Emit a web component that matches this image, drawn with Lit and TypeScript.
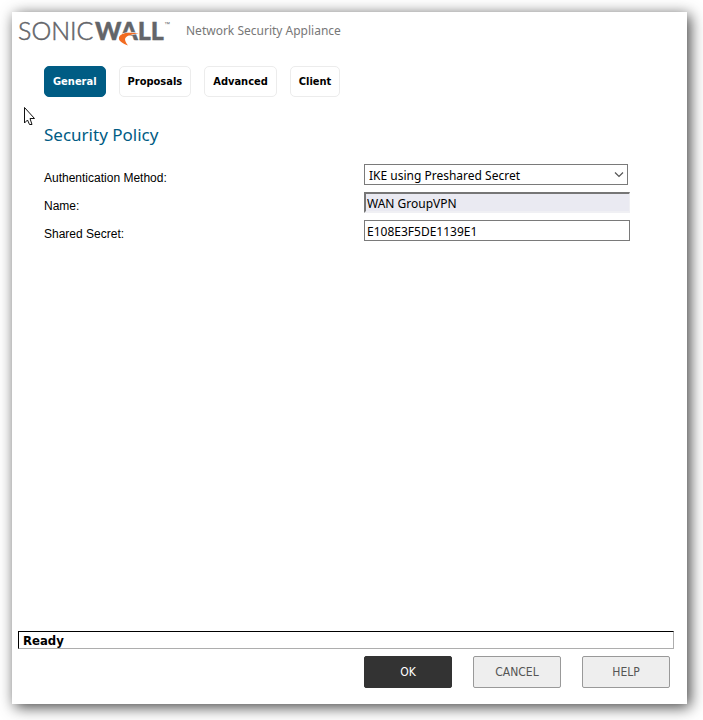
import { LitElement, html, css } from "lit";
import { customElement, state } from "lit/decorators.js";

@customElement("brand-logo")
class BrandLogo extends LitElement {
  static styles = css`
    :host { display: block; width: 152px; height: 28px; color: #636569; }
    svg { display: block; width: 152px; height: 28px; overflow: visible; }
    .word { font-family: Lato, sans-serif; font-size: 25px; fill: currentColor; }
    .thin { font-weight: 300; stroke: currentColor; stroke-width: 0.5px; }
    .heavy { font-weight: 900; stroke: currentColor; stroke-width: 0.4px; }
    .mark { font-family: "Liberation Sans", sans-serif; font-size: 6px; fill: currentColor; }
  `;
  render() {
    return html`
      <svg viewBox="0 0 152 28" role="img" aria-label="SonicWall">
        <text class="word thin" x="0" y="22">SONIC</text>
        <text class="word heavy" x="77" y="22">WALL</text>
        <text class="mark" x="146" y="8">™</text>
        <path d="M101 19.500C102 15 110 13.500 121 15.500C114 16 108 17.500 107 21C107 23 108 25 110 27.500C105 25.500 100 23 101 19.500Z" fill="#f26b21" stroke="#fff" stroke-width="1" paint-order="stroke" />
      </svg>
    `;
  }
}

@customElement("app-root")
class AppRoot extends LitElement {
  @state() private tab = "General";

  private tabs = ["General", "Proposals", "Advanced", "Client"];

  static styles = css`
    * { box-sizing: border-box; }
    :host {
      display: block;
      box-sizing: border-box;
      min-height: 100vh;
      padding: 12px 16px 16px 12px;
      background: #fff;
      color: #000;
      font-family: "DejaVu Sans Condensed", "Noto Sans", sans-serif;
      font-size: 12px;
    }
    .window {
      position: relative;
      display: flex;
      flex-direction: column;
      min-height: calc(100vh - 28px);
      background: #fff;
      box-shadow: 3px 3px 14px rgba(0, 0, 0, 0.75);
    }
    header { display: flex; align-items: flex-start; gap: 16px; padding: 6px; }
    .product { padding-top: 4px; font-family: "Noto Sans", sans-serif; line-height: 18px; font-size: 12px; color: #777; }
    main { flex: 1; padding: 14px 32px; }
    .tabs { display: flex; gap: 13px; }
    .tab {
      height: 31px;
      padding: 0 8px;
      border: 1px solid #ececec;
      border-radius: 5px;
      background: #fff;
      color: #000;
      font: inherit;
      font-size: 11px;
      font-weight: 700;
    }
    .tab.active { background: #005c84; border-color: #005c84; color: #fff; }
    h1 { margin: 26px 0 17px; font-family: "Noto Sans", sans-serif; font-size: 17px; line-height: 24px; font-weight: 400; color: #005c84; }
    .form { display: grid; grid-template-columns: 320px minmax(0, 266px); row-gap: 7px; }
    label { padding-top: 7px; font-family: "Liberation Sans", sans-serif; font-size: 12px; line-height: 14px; }
    .control {
      width: 100%;
      height: 21px;
      margin: 0;
      padding: 1px 2px 0;
      border: 1px solid #7a7a7a;
      border-radius: 0;
      background: #fff;
      color: #000;
      font-family: "Noto Sans", sans-serif;
      font-size: 12px;
    }
    .control.locked { border: 2px solid; border-color: #767676 #f0f0f4 #f0f0f4 #767676; border-right-width: 1px; padding-left: 1px; background: #eaeaf2; }
    .picker { position: relative; margin-right: 2px; }
    select.control { display: block; appearance: none; padding: 1px 18px 0 4px; }
    .chevron { position: absolute; right: 4px; top: 7px; width: 10px; height: 7px; pointer-events: none; }
    .status {
      height: 18px;
      margin: 0 13px 0 6px;
      padding-left: 4px;
      border: 1px solid;
      border-color: #000 #adadad #adadad #000;
      font-size: 13px;
      line-height: 17px;
      font-weight: 700;
    }
    .actions { display: flex; justify-content: flex-end; gap: 21px; padding: 7px 17px 16px; }
    .action {
      width: 88px;
      height: 32px;
      padding: 0;
      border: 1px solid #999;
      border-radius: 2px;
      background: #eee;
      color: #555;
      font: inherit;
    }
    .action.primary { background: #333; border-color: #333; color: #fff; }
    .pointer { position: absolute; left: 11px; top: 94px; width: 13px; height: 21px; pointer-events: none; }
  `;

  render() {
    return html`
      <div class="window">
        <header>
          <brand-logo></brand-logo>
          <span class="product">Network Security Appliance</span>
        </header>
        <main>
          <nav class="tabs">
            ${this.tabs.map(
              (name) => html`<button
                class="tab ${name === this.tab ? "active" : ""}"
                @click=${() => (this.tab = name)}
              >${name}</button>`
            )}
          </nav>
          <h1>Security Policy</h1>
          <form class="form">
            <label for="method">Authentication Method:</label>
            <div class="picker">
              <select id="method" class="control">
                <option>IKE using Preshared Secret</option>
              </select>
              <svg class="chevron" viewBox="0 0 10 7" aria-hidden="true">
                <path d="M1 1.500L5 5.500L9 1.500" fill="none" stroke="#555" stroke-width="1.200" />
              </svg>
            </div>
            <label for="name">Name:</label>
            <input id="name" class="control locked" type="text" value="WAN GroupVPN" readonly />
            <label for="secret">Shared Secret:</label>
            <input id="secret" class="control" type="text" value="E108E3F5DE1139E1" />
          </form>
        </main>
        <div class="status" role="status">Ready</div>
        <div class="actions">
          <button class="action primary">OK</button>
          <button class="action">CANCEL</button>
          <button class="action">HELP</button>
        </div>
        <svg class="pointer" viewBox="0 0 13 21" aria-hidden="true">
          <path d="M1.500 1.500V17L4.500 14L6.500 18.500H9L7 12.500H11.500Z" fill="#fff" stroke="#111" />
        </svg>
      </div>
    `;
  }
}
